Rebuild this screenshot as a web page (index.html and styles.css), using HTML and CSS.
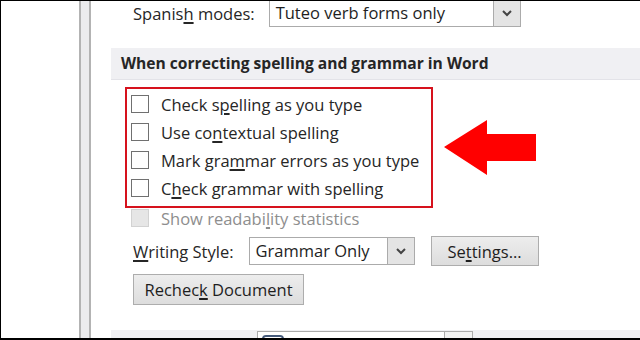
FILE: index.html
```html
<!DOCTYPE html>
<html lang="en">
<head>
  <meta charset="UTF-8">
  <meta name="viewport" content="width=device-width, initial-scale=1.0">
  <title>Word Options - Proofing</title>
  <link rel="stylesheet" href="styles.css">
</head>
<body>
  <div class="window">
    <aside class="nav-pane"></aside>
    <div class="splitter"></div>

    <main class="options">
      <!-- Spanish modes -->
      <div class="field-row spanish-row">
        <label class="field-label">Spanis<u>h</u> modes:</label>
        <div class="combo combo-spanish">
          <span class="combo-text">Tuteo verb forms only</span>
          <span class="combo-btn">
            <svg width="12" height="8" viewBox="0 0 12 8"><path d="M2 2 L6 6 L10 2" fill="none" stroke="#444" stroke-width="2"/></svg>
          </span>
        </div>
      </div>

      <h3 class="section-head">When correcting spelling and grammar in Word</h3>

      <div class="section-body">
        <!-- Highlighted options -->
        <div class="check-group">
          <div class="check"><span class="box"></span>Check s<u>p</u>elling as you type</div>
          <div class="check"><span class="box"></span>Use co<u>n</u>textual spelling</div>
          <div class="check"><span class="box"></span>Mark gra<u>m</u>mar errors as you type</div>
          <div class="check"><span class="box"></span>C<u>h</u>eck grammar with spelling</div>
        </div>
        <div class="check disabled"><span class="box"></span>Show readabi<u>l</u>ity statistics</div>

        <!-- Writing style -->
        <div class="field-row style-row">
          <label class="field-label"><u>W</u>riting Style:</label>
          <div class="combo combo-style">
            <span class="combo-text">Grammar Only</span>
            <span class="combo-btn">
              <svg width="12" height="8" viewBox="0 0 12 8"><path d="M2 2 L6 6 L10 2" fill="none" stroke="#444" stroke-width="2"/></svg>
            </span>
          </div>
          <button class="btn btn-settings">Se<u>t</u>tings...</button>
        </div>

        <button class="btn btn-recheck">Rechec<u>k</u> Document</button>
      </div>

      <!-- Next section, cut off -->
      <div class="section-next">
        <div class="combo combo-next">
          <span class="doc-icon"></span>
          <span class="combo-btn"></span>
        </div>
      </div>
    </main>

    <svg class="callout-arrow" width="92" height="55" viewBox="0 0 92 55">
      <polygon points="0,27 43,0 43,14 92,14 92,41 43,41 43,55" fill="#ff0000"/>
    </svg>
  </div>
</body>
</html>
```

FILE: styles.css
```css
/* General */
* {
  margin: 0;
  padding: 0;
  box-sizing: border-box;
}

body {
  width: 640px;
  height: 340px;
  overflow: hidden;
  background: #fff;
  font-family: "Open Sans", "Noto Sans", sans-serif;
  font-size: 16.5px;
  color: #262626;
}

u {
  text-decoration-thickness: 2px;
  text-underline-offset: 2px;
}

/* Window frame */
.window {
  position: relative;
  display: flex;
  width: 640px;
  height: 340px;
  border-top: 1px solid #000;
  border-left: 1px solid #000;
  border-bottom: 2px solid #000;
  overflow: hidden;
}

.nav-pane {
  width: 78px;
  flex-shrink: 0;
  background: #fff;
}

.splitter {
  width: 12px;
  flex-shrink: 0;
  background: #ececee;
  border-left: 2px solid #b3b3b3;
  border-right: 2px solid #b3b3b3;
}

/* Options area */
.options {
  flex: 1;
  padding-left: 20px;
  margin-top: -2px;
}

.field-row {
  display: flex;
  align-items: center;
  padding-left: 22px;
}

.field-label {
  white-space: nowrap;
}

.spanish-row {
  height: 28px;
}

.spanish-row .field-label {
  margin-right: 14px;
}

/* Combo boxes */
.combo {
  display: flex;
  height: 28px;
  background: #fff;
  border: 1px solid #ababab;
}

.combo-text {
  flex: 1;
  padding-left: 6px;
  line-height: 26px;
  color: #1e1e1e;
}

.combo-btn {
  width: 27px;
  display: flex;
  align-items: center;
  justify-content: center;
  background: #e4e4e4;
  border-left: 1px solid #ababab;
}

.combo-spanish {
  width: 252px;
}

.combo-style {
  width: 166px;
  margin-left: 15px;
}

/* Section header band */
.section-head {
  margin-top: 21px;
  height: 32px;
  padding-left: 10px;
  line-height: 30px;
  font-size: 15.6px;
  font-weight: bold;
  background: #f0f0f3;
  border-bottom: 1px solid #e3e3e8;
  color: #262626;
}

.section-body {
  padding-left: 20px;
}

/* Checkboxes */
.check-group {
  position: relative;
  margin-top: 10px;
}

.check-group::after {
  content: "";
  position: absolute;
  top: -3px;
  bottom: -6px;
  left: -6px;
  width: 304px;
  border: 2px solid #d6121d;
}

.check {
  display: flex;
  align-items: center;
  height: 28px;
  white-space: nowrap;
}

.check .box {
  width: 18px;
  height: 18px;
  margin-right: 12px;
  background: #fff;
  border: 1px solid #707070;
}

.check.disabled {
  margin-top: 2px;
  color: #8e8e8e;
}

.check.disabled .box {
  background: #e6e6e6;
  border-color: #d2d2d2;
}

/* Writing style row */
.style-row {
  padding-left: 2px;
  height: 30px;
  margin-top: 4px;
}

/* Buttons */
.btn {
  font-family: inherit;
  font-size: 16.5px;
  color: #1e1e1e;
  background: linear-gradient(#ededed, #dddddd);
  border: 1px solid #adadad;
}

.btn-settings {
  width: 108px;
  height: 30px;
  margin-left: 16px;
}

.btn-recheck {
  display: block;
  width: 171px;
  height: 31px;
  margin-top: 8px;
  margin-left: 2px;
}

/* Next section (cut off) */
.section-next {
  margin-top: 25px;
  height: 12px;
  background: #f0f0f3;
  padding-left: 146px;
  padding-top: 1px;
}

.combo-next {
  width: 216px;
  height: 20px;
}

.combo-next .combo-btn {
  margin-left: auto;
  width: 28px;
  background: #f2f2f2;
}

.doc-icon {
  width: 22px;
  height: 14px;
  margin: 3px 0 0 4px;
  border: 2px solid #44597a;
  border-radius: 4px 4px 0 0;
}

/* Annotation arrow */
.callout-arrow {
  position: absolute;
  left: 443px;
  top: 119px;
}
```
